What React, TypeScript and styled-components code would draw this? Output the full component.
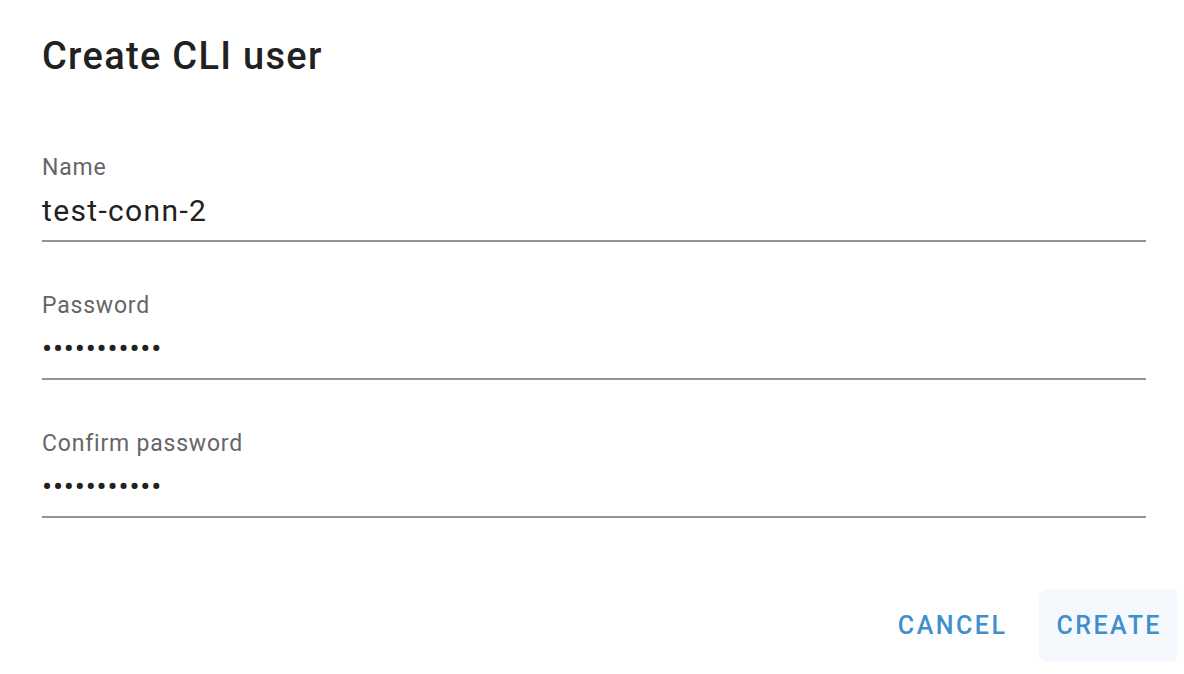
import React from "react";
import styled, { createGlobalStyle } from "styled-components";

const GlobalStyle = createGlobalStyle`
  html, body {
    margin: 0;
    padding: 0;
    background: #ffffff;
  }
  body {
    font-family: Roboto, "Liberation Sans", Arial, sans-serif;
    -webkit-font-smoothing: antialiased;
  }
`;

const Dialog = styled.div`
  box-sizing: border-box;
  width: 1184px;
  height: 674px;
  display: flex;
  flex-direction: column;
  background: #ffffff;
`;

const Title = styled.h2`
  margin: 0;
  padding: 28px 38px 0 42px;
  font-size: 38px;
  line-height: 56px;
  font-weight: 500;
  letter-spacing: 1.3px;
  color: #212121;
`;

const Form = styled.form`
  display: flex;
  flex-direction: column;
  gap: 53px;
  padding: 73px 38px 0 42px;
  margin: 0;
`;

const Field = styled.label`
  display: flex;
  flex-direction: column;
`;

const Label = styled.span`
  font-size: 23px;
  line-height: 22px;
  font-weight: 400;
  letter-spacing: 0.8px;
  color: #666666;
`;

const InputWrap = styled.div`
  margin-top: 16px;
  padding-bottom: 15px;
  border-bottom: 2px solid #949494;
`;

const Input = styled.input<{ $secret?: boolean }>`
  display: block;
  box-sizing: border-box;
  width: 100%;
  height: 30px;
  margin: 0;
  padding: 0;
  border: 0;
  outline: none;
  background: transparent;
  font-family: Roboto, "Liberation Sans", Arial, sans-serif;
  font-size: 30px;
  line-height: 30px;
  letter-spacing: ${(p) => (p.$secret ? "0.8px" : "1.35px")};
  color: #212121;
`;

const Actions = styled.div`
  margin-top: auto;
  display: flex;
  justify-content: flex-end;
  gap: 16px;
  padding: 0 6px 12px 0;
`;

const Button = styled.button<{ $focused?: boolean }>`
  box-sizing: border-box;
  height: 73px;
  padding: 0 16px 0 17px;
  border: 0;
  border-radius: 8px;
  background: ${(p) => (p.$focused ? "#f5f9fd" : "transparent")};
  font-family: Roboto, "Liberation Sans", Arial, sans-serif;
  font-size: 25px;
  font-weight: 500;
  letter-spacing: 0.1em;
  color: #3f8fcd;
  cursor: pointer;
`;

export default function App() {
  return (
    <>
      <GlobalStyle />
      <Dialog>
        <Title>Create CLI user</Title>
        <Form onSubmit={(e) => e.preventDefault()}>
          <Field>
            <Label>Name</Label>
            <InputWrap>
              <Input type="text" defaultValue="test-conn-2" readOnly />
            </InputWrap>
          </Field>
          <Field>
            <Label>Password</Label>
            <InputWrap>
              <Input type="password" $secret defaultValue="secretpass1" readOnly />
            </InputWrap>
          </Field>
          <Field>
            <Label>Confirm password</Label>
            <InputWrap>
              <Input type="password" $secret defaultValue="secretpass1" readOnly />
            </InputWrap>
          </Field>
        </Form>
        <Actions>
          <Button type="button">CANCEL</Button>
          <Button type="button" $focused>CREATE</Button>
        </Actions>
      </Dialog>
    </>
  );
}
